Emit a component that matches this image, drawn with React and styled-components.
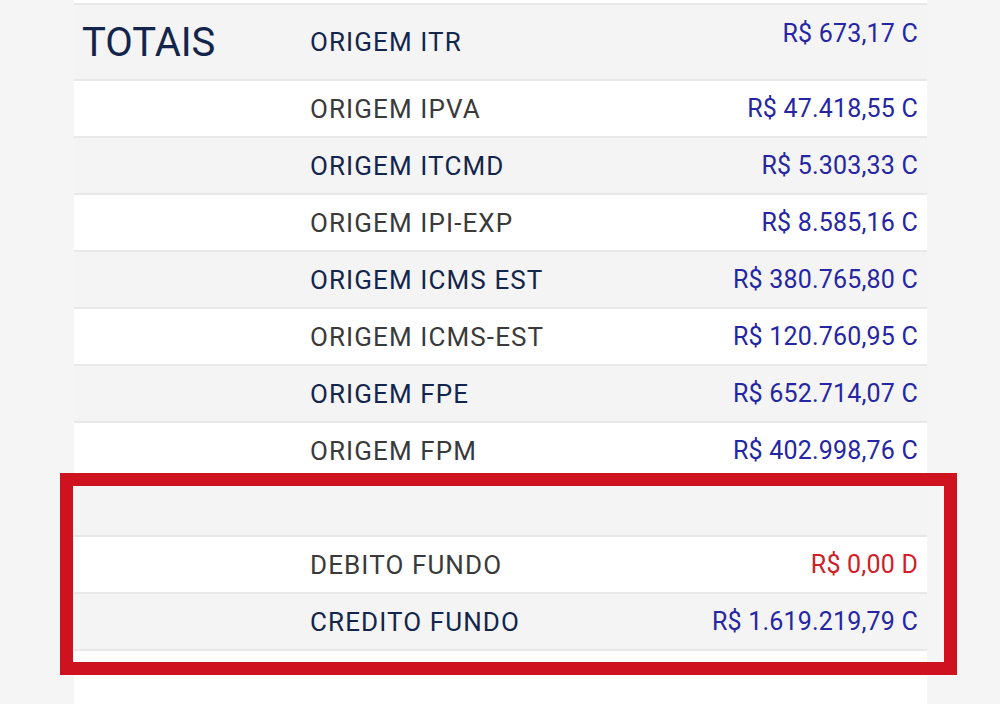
import React from 'react'
import styled, { createGlobalStyle } from 'styled-components'

const GlobalStyle = createGlobalStyle`
  html, body {
    margin: 0;
    padding: 0;
    background: #f5f5f5;
    font-family: Roboto, "Liberation Sans", sans-serif;
    overflow: hidden;
  }
`

const colors = {
  navy: '#13254b',
  grey: '#3a3a3a',
  blue: '#2626a3',
  red: '#d0202a',
  stripe: '#f4f4f4',
  line: '#e8e8e8',
  frame: '#cf1220',
}

const Page = styled.div`
  height: 704px;
  padding-left: 74px;
  overflow: hidden;
`

const Table = styled.div`
  position: relative;
  width: 853px;
`

const Row = styled.div`
  display: grid;
  grid-template-columns: 236px 1fr auto;
  align-items: center;
  height: ${props => props.height || 55}px;
  padding-right: 9px;
  background: ${props => props.striped ? colors.stripe : '#fff'};
  border-bottom: 2px solid ${colors.line};
`

const Title = styled.div`
  padding-left: 8px;
  font-size: 40px;
  color: ${colors.navy};
`

const Label = styled.div`
  grid-column: 2;
  font-size: 26px;
  letter-spacing: 1.1px;
  color: ${props => props.striped ? colors.navy : colors.grey};
`

const Value = styled.div`
  grid-column: 3;
  font-size: 25px;
  letter-spacing: 0.2px;
  text-align: right;
  color: ${props => props.debit ? colors.red : colors.blue};
  align-self: ${props => props.top ? 'start' : 'center'};
  padding-top: ${props => props.top ? 14 : 0}px;
`

const Highlight = styled.div`
  position: absolute;
  left: -14px;
  top: 473px;
  width: 871px;
  height: 176px;
  border: 13px solid ${colors.frame};
  pointer-events: none;
`

const rows = [
  { label: 'ORIGEM IPVA', value: 'R$ 47.418,55 C' },
  { label: 'ORIGEM ITCMD', value: 'R$ 5.303,33 C' },
  { label: 'ORIGEM IPI-EXP', value: 'R$ 8.585,16 C' },
  { label: 'ORIGEM ICMS EST', value: 'R$ 380.765,80 C' },
  { label: 'ORIGEM ICMS-EST', value: 'R$ 120.760,95 C' },
  { label: 'ORIGEM FPE', value: 'R$ 652.714,07 C' },
  { label: 'ORIGEM FPM', value: 'R$ 402.998,76 C' },
  { label: '', value: '' },
  { label: 'DEBITO FUNDO', value: 'R$ 0,00 D', debit: true },
  { label: 'CREDITO FUNDO', value: 'R$ 1.619.219,79 C' },
  { label: '', value: '' },
]

export default function App() {
  return (
    <>
      <GlobalStyle />
      <Page>
        <Table>
          <Row height={3} />
          <Row striped height={74}>
            <Title>TOTAIS</Title>
            <Label striped>ORIGEM ITR</Label>
            <Value top>R$ 673,17 C</Value>
          </Row>
          {rows.map((r, i) => {
            const striped = i % 2 === 1
            return (
              <Row key={i} striped={striped}>
                {r.label && <Label striped={striped}>{r.label}</Label>}
                {r.value && <Value debit={r.debit}>{r.value}</Value>}
              </Row>
            )
          })}
          <Highlight />
        </Table>
      </Page>
    </>
  )
}
